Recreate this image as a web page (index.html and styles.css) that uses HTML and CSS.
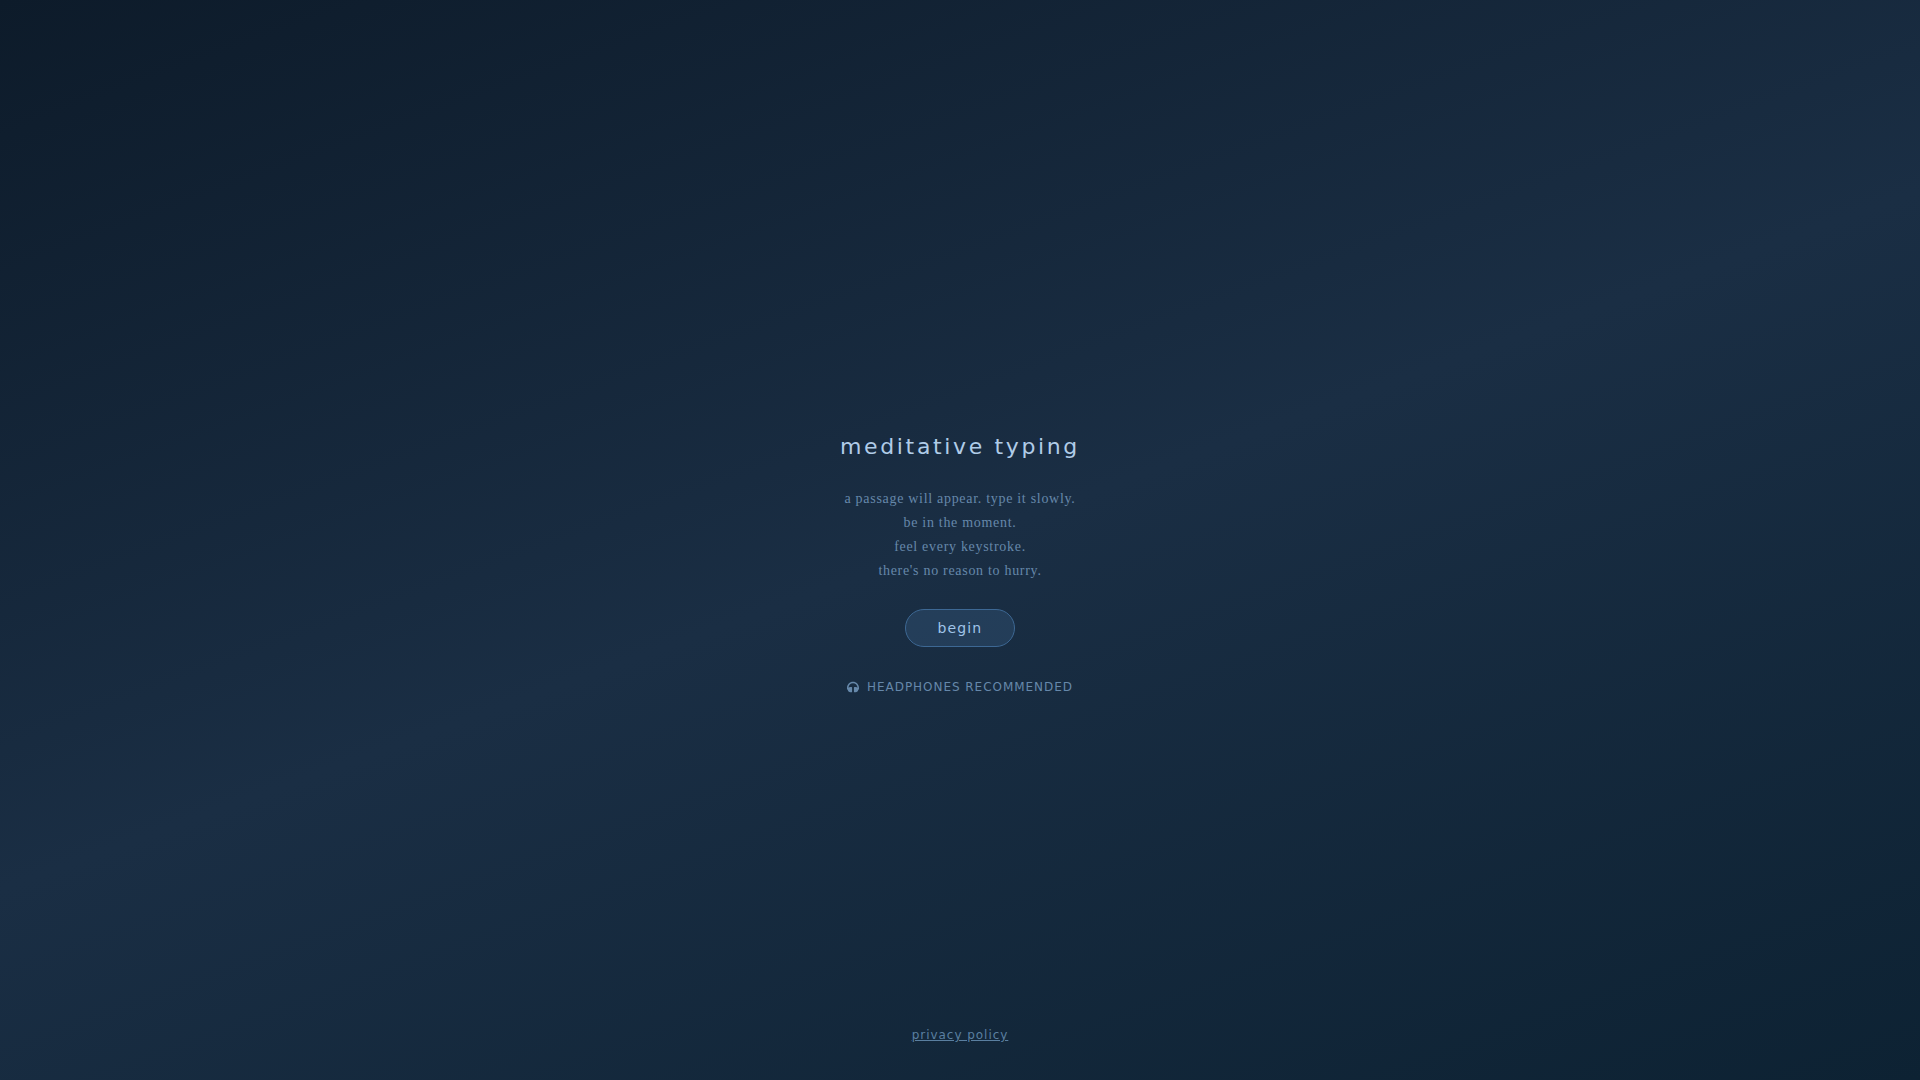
FILE: index.html
```html
<!DOCTYPE html>
<html lang="en">
<head>
  <meta charset="UTF-8">
  <meta name="viewport" content="width=device-width, initial-scale=1.0">
  <title>meditative typing</title>
  <link rel="stylesheet" href="styles.css">
</head>
<body>
  <main class="intro">
    <h1 class="title">meditative typing</h1>
    <p class="guide">
      a passage will appear. type it slowly.<br>
      be in the moment.<br>
      feel every keystroke.<br>
      there's no reason to hurry.
    </p>
    <button class="begin-btn" type="button">begin</button>
    <div class="headphones">
      <svg class="headphones-icon" viewBox="0 0 512 512" fill="currentColor" aria-hidden="true">
        <path d="M256 32C114.520 32 0 146.497 0 288v48a32 32 0 0 0 17.689 28.622l14.383 7.191C34.083 431.903 83.421 480 144 480h48c13.255 0 24-10.745 24-24V280c0-13.255-10.745-24-24-24h-48c-31.342 0-59.671 12.879-80 33.627V288c0-105.869 86.131-192 192-192s192 86.131 192 192v1.627C427.671 268.879 399.342 256 368 256h-48c-13.255 0-24 10.745-24 24v176c0 13.255 10.745 24 24 24h48c60.579 0 109.917-48.098 111.928-108.187l14.382-7.191A32 32 0 0 0 512 336v-48c0-141.479-114.496-256-256-256z"/>
      </svg>
      <span>headphones recommended</span>
    </div>
  </main>

  <footer class="footer">
    <a class="privacy-link" href="#privacy">privacy policy</a>
  </footer>
</body>
</html>
```
FILE: styles.css
```css
* {
  box-sizing: border-box;
  margin: 0;
  padding: 0;
}

body {
  min-height: 100vh;
  display: grid;
  grid-template-rows: 1fr auto 1fr;
  justify-items: center;
  background: linear-gradient(160deg, #0d1b2a 0%, #1a2e44 50%, #0d2233 100%);
  font-family: "DejaVu Sans", sans-serif;
  color: #b0cce8;
}

.intro {
  grid-row: 2;
  display: flex;
  flex-direction: column;
  align-items: center;
  text-align: center;
  padding: 96px 24px 48px;
}

.title {
  font-size: 22px;
  font-weight: 400;
  line-height: 28px;
  letter-spacing: 0.12em;
  margin-bottom: 26px;
}

.guide {
  font-family: "Liberation Serif", serif;
  font-size: 14px;
  line-height: 1.7;
  letter-spacing: 0.05em;
  color: #6688aa;
  margin-bottom: 26px;
}

.begin-btn {
  padding: 10px 32px;
  font-family: inherit;
  font-size: 14px;
  letter-spacing: 0.08em;
  color: #a0c4e8;
  background: rgba(100, 160, 220, 0.15);
  border: 1px solid #3d6894;
  border-radius: 20px;
  cursor: pointer;
}

.begin-btn:hover {
  background: rgba(100, 160, 220, 0.25);
}

.headphones {
  display: flex;
  align-items: center;
  gap: 8px;
  margin-top: 32px;
  font-size: 12px;
  line-height: 16px;
  letter-spacing: 0.08em;
  text-transform: uppercase;
  color: #6688aa;
}

.headphones-icon {
  width: 12px;
  height: 12px;
}

.footer {
  grid-row: 3;
  align-self: end;
  padding-bottom: 36px;
  font-size: 12px;
  line-height: 18px;
  letter-spacing: 0.08em;
}

.privacy-link {
  color: #5a7fa0;
}
```
